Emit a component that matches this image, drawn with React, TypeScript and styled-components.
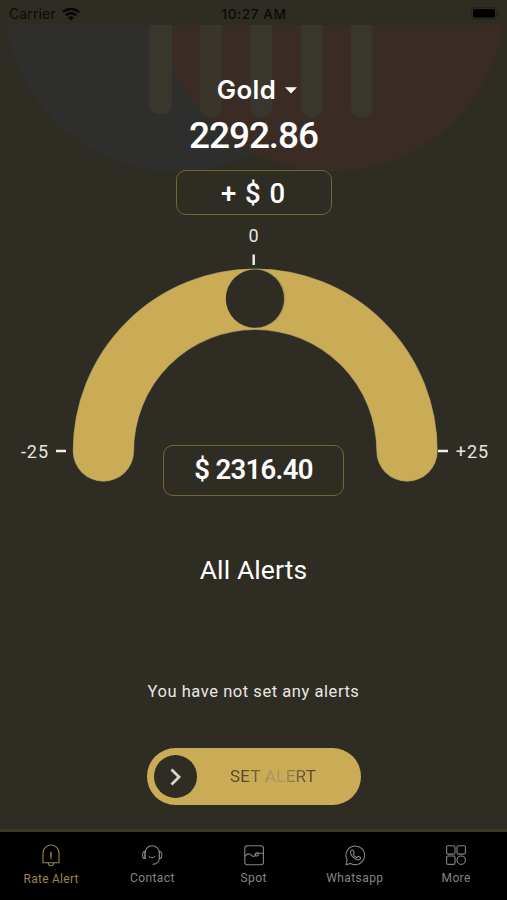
import React from "react";
import styled, { createGlobalStyle } from "styled-components";

const GlobalStyle = createGlobalStyle`
  * { box-sizing: border-box; }
  body { margin: 0; background: #2f2c24; font-family: Roboto, sans-serif; color: #fff; }
`;

const Screen = styled.div`
  width: 507px;
  height: 900px;
  display: flex;
  flex-direction: column;
  background: #2f2c24;
  overflow: hidden;
  position: relative;
  isolation: isolate;
`;

const StatusBar = styled.header`
  height: 25px;
  flex: none;
  padding: 2px 8px 0 9px;
  display: grid;
  grid-template-columns: 1fr auto 1fr;
  align-items: center;
  font-family: Inter, sans-serif;
  color: #0b0a08;
  line-height: 20px;
`;

const Carrier = styled.div`
  display: flex;
  align-items: center;
  gap: 6px;
  font-size: 14px;
  letter-spacing: 0.1px;
`;

const Clock = styled.div`
  font-size: 13.6px;
  font-weight: 500;
  letter-spacing: 0.6px;
`;

const Battery = styled.svg`
  justify-self: end;
`;

const Artwork = styled.svg`
  position: absolute;
  left: 0;
  top: 25px;
  z-index: -1;
`;

const Main = styled.main`
  flex: none;
  height: 804px;
  display: flex;
  flex-direction: column;
  align-items: center;
`;

const MetalPicker = styled.button`
  margin: 49px 0 0 7px;
  height: 32px;
  padding: 0;
  border: 0;
  background: none;
  color: #fff;
  display: flex;
  align-items: center;
  gap: 9px;
  font: 600 25.8px/32px Inter, sans-serif;
  letter-spacing: 0.4px;
`;

const SpotPrice = styled.div`
  height: 44px;
  margin: 8px 0 0;
  font-size: 37px;
  font-weight: 500;
  line-height: 44px;
  letter-spacing: -1.1px;
`;

const Offset = styled.div`
  width: 156px;
  height: 45px;
  margin-top: 12px;
  border: 1px solid #75652f;
  border-radius: 10px;
  background: #2f2c24;
  text-align: center;
  font-size: 27.5px;
  font-weight: 500;
  line-height: 46px;
  letter-spacing: 1px;
`;

const Gauge = styled.section`
  width: 507px;
  height: 281px;
  display: grid;
`;

const Dial = styled.svg`
  grid-area: 1 / 1;
`;

const Label = styled.span<{ $side: "top" | "left" | "right" }>`
  grid-area: 1 / 1;
  align-self: ${(p) => (p.$side === "top" ? "start" : "end")};
  justify-self: ${(p) =>
    p.$side === "top" ? "center" : p.$side === "left" ? "start" : "end"};
  margin: ${(p) => (p.$side === "top" ? "11px 0 0 1px" : "0 18px 34px 21px")};
  font-size: 18px;
  line-height: 20px;
  letter-spacing: 0.9px;
  color: #e6e5e2;
`;

const AlertPrice = styled.div`
  grid-area: 1 / 1;
  align-self: end;
  justify-self: center;
  width: 181px;
  height: 51px;
  border: 1px solid #75652f;
  border-radius: 10px;
  text-align: center;
  font-size: 27.5px;
  font-weight: 600;
  line-height: 48px;
  letter-spacing: -0.7px;
`;

const Heading = styled.h2`
  margin: 58px 0 0;
  font-size: 26.5px;
  font-weight: 400;
  line-height: 32px;
  letter-spacing: 0.1px;
`;

const Empty = styled.p`
  margin: 96px 0 0;
  font-size: 16.5px;
  line-height: 20px;
  letter-spacing: 0.55px;
  color: #e8e7e4;
`;

const SetAlert = styled.button`
  width: 214px;
  height: 57px;
  margin: 46px 0 0 1px;
  padding: 0 7px;
  border: 0;
  border-radius: 29px;
  background: #cbac56;
  display: flex;
  align-items: center;
`;

const Thumb = styled.span`
  width: 43px;
  height: 43px;
  border-radius: 50%;
  background: #2f2c24;
  display: grid;
  place-items: center;
`;

const SlideText = styled.span`
  margin: 0 0 2px 33px;
  font: 400 17px/24px Roboto, sans-serif;
  letter-spacing: 0.25px;
  background: linear-gradient(90deg, #54472a 15%, #74643e 33%, #a79662 45%, #a79662 62%, #66573a 82%, #54472a);
  background-clip: text;
  color: transparent;
`;

const TabBar = styled.nav`
  flex: 1;
  border-top: 3px solid #3c3922;
  background: #000;
  display: grid;
  grid-template-columns: repeat(5, 101.25px);
  padding-top: 11px;
`;

const Tab = styled.a<{ $active?: boolean }>`
  display: flex;
  flex-direction: column;
  align-items: center;
  gap: 3px;
  padding-left: 1px;
  color: ${(p) => (p.$active ? "#9a8548" : "#858585")};
  font-size: 12px;
  line-height: 16px;
  letter-spacing: ${(p) => (p.$active ? "0.25px" : "0.4px")};
  svg { fill: none; stroke: currentColor; stroke-width: 1.1; }
`;

const TabName = styled.span<{ $active?: boolean }>`
  margin-top: ${(p) => (p.$active ? "1px" : "0")};
`;

const TabIcon = ({ children }: { children: React.ReactNode }) => (
  <svg width="24" height="24" viewBox="0 0 24 24" strokeLinecap="round" strokeLinejoin="round">
    {children}
  </svg>
);

const tabs = [
  {
    name: "Rate Alert",
    icon: (
      <>
        <path d="M4 19.7V10a8 8 0 0 1 16 0v9.7Z" />
        <path d="M9.2 20q.4 2.7 2.8 2.7t2.8-2.7" />
        <path d="M12 9.5v4M12 15.3v.2" strokeWidth="1.5" />
      </>
    ),
  },
  {
    name: "Contact",
    icon: (
      <>
        <path d="M5 15.5V10a7.2 7.2 0 0 1 14.4 0v5.5q-.5 5-6.4 5.9" />
        <path d="M5 8.5H4q-1.5.7-1.5 3.5T4 15.5h1ZM19.4 8.5h1q1.5.7 1.5 3.5t-1.5 3.5h-1ZM9.2 13.6q3 2 5.5 0" />
      </>
    ),
  },
  {
    name: "Spot",
    icon: (
      <>
        <rect x="2.8" y="2.7" width="18.6" height="19" rx="2.5" />
        <path d="M3 13.2q2.5-2.8 4.5-2.2c2 .5 2.5 2.8 4.3 2.4s.9-2.4 3-3.1 2 2.2.2 2.6-2.8-1.6-1-2.7S17 11 21.2 10" />
      </>
    ),
  },
  {
    name: "Whatsapp",
    icon: (
      <>
        <path d="m2.9 21.7 1.3-4.8a9.3 9.3 0 1 1 3.5 3.5Z" />
        <path d="M8.5 7.2c-2 1-1.1 4.4 1.7 7.1s6.2 3.5 7.2 1.5c.5-1.1-.2-1.6-1.1-2l-1.3-.5-1.3 1.3c-1.6-.6-2.8-1.8-3.4-3.4l1-1.3-.9-2.1c-.4-.8-1-.9-1.9-.6Z" />
      </>
    ),
  },
  {
    name: "More",
    icon: (
      <>
        <rect x="2.6" y="2.7" width="8.4" height="8.4" rx="1.5" />
        <rect x="13" y="2.7" width="8.4" height="8.4" rx="1.5" />
        <rect x="2.6" y="13" width="8.4" height="8.4" rx="1.5" />
        <circle cx="17.2" cy="17.2" r="4.2" />
      </>
    ),
  },
];

export default function App() {
  return (
    <Screen>
      <GlobalStyle />
      <StatusBar>
        <Carrier>
          Carrier
          <svg width="18" height="14" viewBox="0 0 18 14" fill="none" stroke="#080806" strokeWidth="2.5">
            <path d="M.9 5.2a11.6 11.6 0 0 1 16.2 0M3.8 8.4a7.4 7.4 0 0 1 10.4 0" />
            <path d="M9 13.5 6 10.5q3-2.3 6 0Z" fill="#080806" stroke="none" />
          </svg>
        </Carrier>
        <Clock>10:27 AM</Clock>
        <Battery width="28" height="13" viewBox="0 0 28 13">
          <rect x=".5" y=".5" width="25" height="11.5" rx="3.2" fill="none" stroke="#24221b" />
          <rect x="2" y="2" width="22" height="8.5" rx="2" fill="#000" />
          <path d="M26.7 4.2q1.3.5 1.3 2t-1.3 2Z" fill="#24221b" />
        </Battery>
      </StatusBar>
      <Artwork width="507" height="150" viewBox="0 25 507 150">
        <circle cx="177" cy="-2" r="173.5" fill="#2e2f2d" />
        <circle cx="332" cy="-2" r="173.5" fill="#3a2c25" />
        <rect x="149.5" y="0" width="22.5" height="114" rx="9" fill="#39362c" />
        <rect x="200" y="0" width="22" height="117.5" rx="11" fill="#39352b" />
        <rect x="250" y="0" width="22" height="117.5" rx="11" fill="#39362d" />
        <rect x="300.5" y="0" width="22" height="117.5" rx="11" fill="#38362d" />
        <rect x="350.5" y="0" width="22" height="117.5" rx="11" fill="#38362d" />
      </Artwork>
      <Main>
        <MetalPicker>
          Gold
          <svg width="12" height="7" viewBox="0 0 12 7">
            <path d="M0 .3h12L6 6.6Z" fill="#fff" />
          </svg>
        </MetalPicker>
        <SpotPrice>2292.86</SpotPrice>
        <Offset>+ $ 0</Offset>
        <Gauge>
          <Dial width="507" height="281" viewBox="0 215 507 281">
            <path
              d="M103.4 451a151.8 151.8 0 0 1 303.6 0"
              fill="none"
              stroke="#8f8760"
              strokeWidth="61.4"
              strokeLinecap="round"
            />
            <path
              d="M103.4 451a151.8 151.8 0 0 1 303.6 0"
              fill="none"
              stroke="#cbac56"
              strokeWidth="60.2"
              strokeLinecap="round"
            />
            <circle cx="255.8" cy="298.7" r="29.6" fill="#a99355" />
            <circle cx="254.9" cy="298.7" r="29.1" fill="#2f2c24" />
            <path d="M253.7 254.5v10.5M56 451h10M438 451h10" stroke="#f1f0ed" strokeWidth="2.4" />
          </Dial>
          <Label $side="top">0</Label>
          <Label $side="left">-25</Label>
          <Label $side="right">+25</Label>
          <AlertPrice>$ 2316.40</AlertPrice>
        </Gauge>
        <Heading>All Alerts</Heading>
        <Empty>You have not set any alerts</Empty>
        <SetAlert>
          <Thumb>
            <svg width="12" height="18" viewBox="0 0 12 18">
              <path d="m1.5 1.5 7.5 7.5-7.5 7.5" fill="none" stroke="#d6d5d2" strokeWidth="2.8" />
            </svg>
          </Thumb>
          <SlideText>SET ALERT</SlideText>
        </SetAlert>
      </Main>
      <TabBar>
        {tabs.map((tab, i) => (
          <Tab key={tab.name} $active={i === 0}>
            <TabIcon>{tab.icon}</TabIcon>
            <TabName $active={i === 0}>{tab.name}</TabName>
          </Tab>
        ))}
      </TabBar>
    </Screen>
  );
}
